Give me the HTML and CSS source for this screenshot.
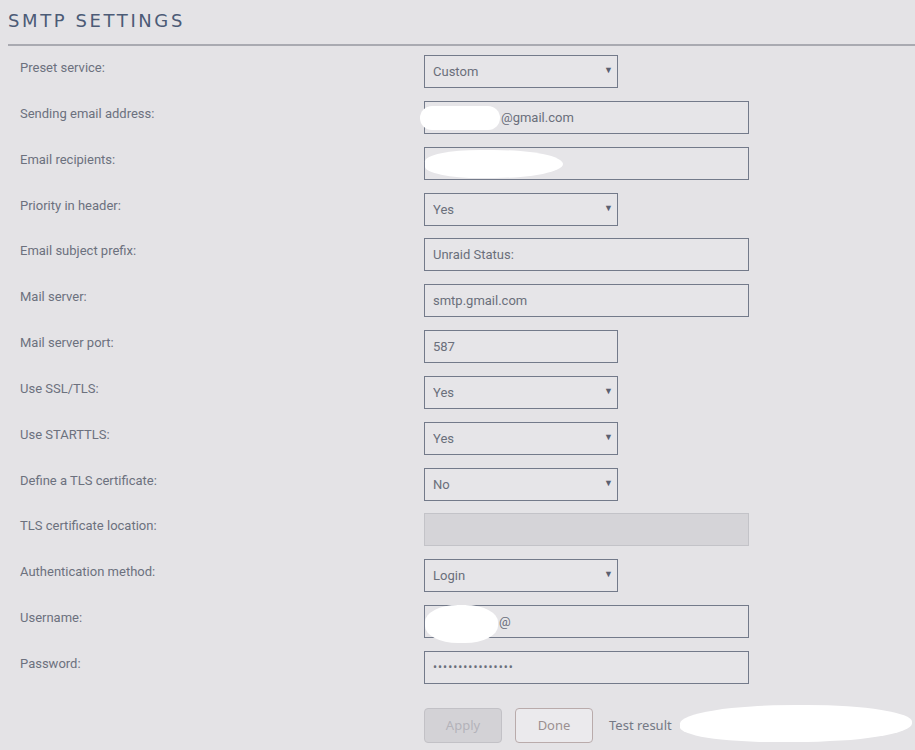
FILE: index.html
```html
<!DOCTYPE html>
<html lang="en">
<head>
    <meta charset="UTF-8">
    <title>SMTP Settings</title>
    <link rel="stylesheet" href="styles.css">
</head>
<body>
    <div class="title">SMTP SETTINGS</div>
    <form class="settings">
        <div class="row">
            <label>Preset service:</label>
            <div class="select"><select><option>Custom</option></select></div>
        </div>
        <div class="row">
            <label>Sending email address:</label>
            <div class="field wide">
                <input type="text" class="masked-sender" value="@gmail.com">
                <span class="redact r-sender"></span>
            </div>
        </div>
        <div class="row">
            <label>Email recipients:</label>
            <div class="field wide">
                <input type="text" value="">
                <span class="redact r-recipients"></span>
            </div>
        </div>
        <div class="row">
            <label>Priority in header:</label>
            <div class="select"><select><option>Yes</option></select></div>
        </div>
        <div class="row">
            <label>Email subject prefix:</label>
            <div class="field wide"><input type="text" value="Unraid Status:"></div>
        </div>
        <div class="row">
            <label>Mail server:</label>
            <div class="field wide"><input type="text" value="smtp.gmail.com"></div>
        </div>
        <div class="row">
            <label>Mail server port:</label>
            <div class="field"><input type="text" value="587"></div>
        </div>
        <div class="row">
            <label>Use SSL/TLS:</label>
            <div class="select"><select><option>Yes</option></select></div>
        </div>
        <div class="row">
            <label>Use STARTTLS:</label>
            <div class="select"><select><option>Yes</option></select></div>
        </div>
        <div class="row">
            <label>Define a TLS certificate:</label>
            <div class="select"><select><option>No</option></select></div>
        </div>
        <div class="row">
            <label>TLS certificate location:</label>
            <div class="field wide"><input type="text" value="" disabled></div>
        </div>
        <div class="row">
            <label>Authentication method:</label>
            <div class="select"><select><option>Login</option></select></div>
        </div>
        <div class="row">
            <label>Username:</label>
            <div class="field wide">
                <input type="text" class="masked-user" value="@">
                <span class="redact r-user"></span>
            </div>
        </div>
        <div class="row">
            <label>Password:</label>
            <div class="field wide"><input type="password" value="passwordpassword"></div>
        </div>
        <div class="actions">
            <button type="button" class="btn" disabled>Apply</button>
            <button type="button" class="btn done">Done</button>
            <span class="test-result">Test result</span>
            <span class="redact r-result"></span>
        </div>
    </form>
</body>
</html>
```

FILE: styles.css
```css
body {
    margin: 0;
    padding: 0 0 0 8px;
    background-color: #e4e3e6;
    font-family: Roboto, "Noto Sans", sans-serif;
    overflow: hidden;
}
.title {
    padding-top: 6px;
    height: 38px;
    line-height: 30px;
    font-family: "DejaVu Sans", sans-serif;
    font-size: 18px;
    letter-spacing: 2.6px;
    color: #4c5b76;
    border-bottom: 2px solid #a9aab1;
}
.settings {
    margin-top: 9px;
    padding-left: 12px;
    position: relative;
}
.row {
    display: flex;
    align-items: flex-start;
    height: 45.85px;
}
.row label {
    width: 404px;
    padding-top: 5px;
    font-size: 13px;
    line-height: 16px;
    color: #6c717e;
}
.field, .select {
    position: relative;
    width: 194px;
}
.field.wide {
    width: 325px;
}
input, select {
    box-sizing: border-box;
    width: 100%;
    height: 33px;
    margin: 0;
    padding: 0 8px;
    border: 1px solid #737a8a;
    border-radius: 0;
    background-color: #e6e5e8;
    font-family: Roboto, "Noto Sans", sans-serif;
    font-size: 13px;
    color: #6a6f7b;
    outline: none;
}
input:disabled {
    background-color: #d5d4d8;
    border-color: #c3c3c8;
}
input[type="password"] {
    letter-spacing: 1px;
    font-size: 12px;
}
.masked-sender {
    text-indent: 68px;
}
.masked-user {
    text-indent: 66px;
}
select {
    appearance: none;
    -webkit-appearance: none;
}
.select::after {
    content: "\25BC";
    position: absolute;
    right: 5px;
    top: 10px;
    font-size: 9px;
    color: #5b6070;
    pointer-events: none;
}
.redact {
    position: absolute;
    background-color: #fff;
    border-radius: 50%;
}
.r-sender {
    left: -4px;
    top: 5px;
    width: 80px;
    height: 24px;
    border-radius: 12px;
}
.r-recipients {
    left: 1px;
    top: 3px;
    width: 138px;
    height: 28px;
    border-radius: 40% 50% 50% 40%;
}
.r-user {
    left: 1px;
    top: 0;
    width: 73px;
    height: 38px;
    border-radius: 45%;
}
.actions {
    display: flex;
    align-items: center;
    gap: 13px;
    margin-top: 11px;
    padding-left: 404px;
    position: relative;
}
.btn {
    box-sizing: border-box;
    width: 78px;
    height: 35px;
    border: 1px solid #c2c1c6;
    border-radius: 4px;
    background-color: #d3d2d6;
    font-family: "Noto Sans", sans-serif;
    font-size: 13px;
    color: #b4b3ba;
}
.btn.done {
    background-color: #ebeaed;
    border-color: #b9abab;
    color: #9b9090;
}
.test-result {
    margin-left: 3px;
    font-family: "Noto Sans", sans-serif;
    font-size: 13px;
    color: #747985;
}
.r-result {
    left: 660px;
    top: -3px;
    width: 232px;
    height: 37px;
    border-radius: 50% 45% 50% 40%;
}
```
